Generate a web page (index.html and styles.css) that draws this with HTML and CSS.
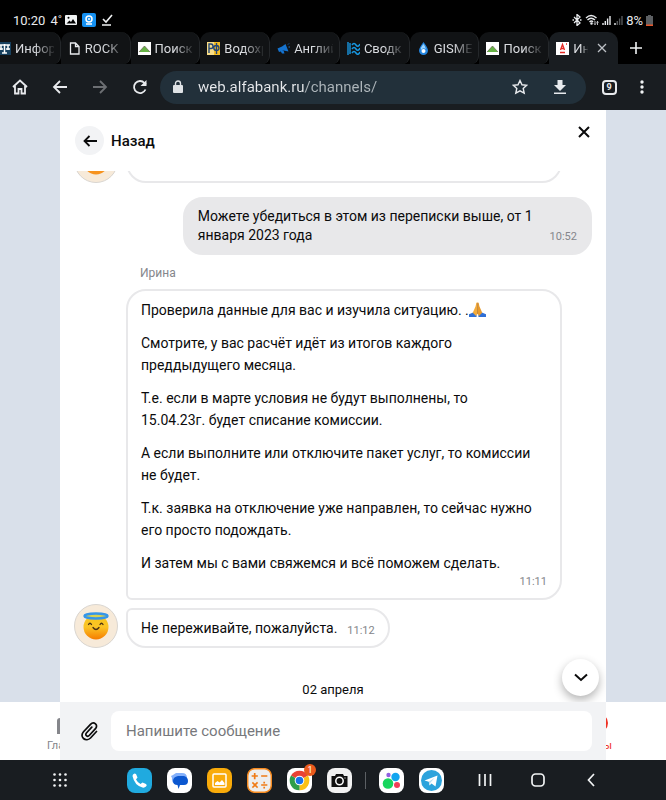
FILE: index.html
```html
<!DOCTYPE html>
<html lang="ru">
<head>
  <meta charset="UTF-8">
  <meta name="viewport" content="width=device-width, initial-scale=1.0">
  <title>Альфа-Банк — чат</title>
  <link rel="stylesheet" href="styles.css">
</head>
<body>
  <!-- Status bar -->
  <div class="status-bar">
    <span>10:20</span>
    <span class="temp">4˚</span>
    <svg width="12" height="12" viewBox="0 0 12 12"><rect x="0" y="1" width="12" height="10" rx="1" fill="#f1f3f4"/><path d="M1.500 9.500l3-3 1.500 1.500L8 5l3 4.500z" fill="#000"/><circle cx="3.500" cy="3.800" r="1" fill="#000"/></svg>
    <svg width="14" height="14" viewBox="0 0 14 14"><rect width="14" height="14" rx="2" fill="#1591f2"/><circle cx="7" cy="6" r="3" fill="none" stroke="#fff" stroke-width="1.500"/><circle cx="7" cy="6" r="1" fill="#fff"/><path d="M4 11h6" stroke="#fff" stroke-width="1.500"/></svg>
    <svg width="12" height="12" viewBox="0 0 12 12" fill="none" stroke="#f1f3f4" stroke-width="1.600"><path d="M2 5l3 3 6-7M1 11h9"/></svg>
    <div class="status-right">
      <svg width="10" height="12" viewBox="0 0 10 12" fill="none" stroke="#e8eaed" stroke-width="1.300"><path d="M2 3l6 6-3 2.500V.5L8 3 2 9M.5 6h1.500M8 6h1.500"/></svg>
      <svg width="14" height="12" viewBox="0 0 14 12" fill="none" stroke="#e8eaed" stroke-width="1.400"><path d="M1 4q5-5 10.500 0M2.500 6q3.500-3.500 7.500 0M4.500 8q2-2 3.500 0"/><circle cx="6.500" cy="9.500" r=".6"/><path d="M10 7v3.500M12.500 11V7.500M9 9.500l1 1.200 1-1.200M11.500 8.500l1-1.200 1 1.200" stroke-width=".8"/></svg>
      <svg width="9" height="10" viewBox="0 0 9 10" stroke="#e8eaed" stroke-width="1.400"><path d="M1 10V8M3.300 10V6M5.600 10V3.500M8 10V1"/></svg>
      <svg width="9" height="10" viewBox="0 0 9 10" stroke="#55585b" stroke-width="1.400"><path d="M1 10V8" stroke="#e8eaed"/><path d="M3.300 10V6M5.600 10V3.500M8 10V1"/></svg>
      <span>8%</span>
      <svg width="7" height="11" viewBox="0 0 7 11"><path d="M2 0h3v1h2v10H0V1h2z" fill="#5c5f62"/><path d="M0 9.500h7V11H0z" fill="#e8562a"/></svg>
    </div>
  </div>

  <!-- Browser tabs -->
  <div class="tab-strip">
    <a class="tab" href="#"><svg class="favicon" viewBox="0 0 13 13"><path fill="#17405e" d="M0 0h13v13H0z"/><path d="M1 3h11M6.500 2v9M4 11h5M3 3v5M10 3v5M1 7h4M8 7h4" stroke="#fff" stroke-width="1.500"/></svg><span>Инфор</span></a>
    <a class="tab" href="#"><svg class="favicon" viewBox="0 0 13 13" fill="none" stroke="#e8eaed" stroke-width="1.300"><path d="M2.500 1h5L11 4.500V12H2.500zM7.500 1v3.500H11"/></svg><span>ROCK</span></a>
    <a class="tab" href="#"><svg class="favicon" viewBox="0 0 13 13"><path fill="#fff" d="M0 0h13v13H0z"/><path d="M6.500 4L1 10h11z" fill="#67b346"/><path d="M1 10l5.500-6L12 10" fill="none" stroke="#675d50" stroke-width=".7"/></svg><span>Поиск</span></a>
    <a class="tab" href="#"><svg class="favicon" viewBox="0 0 13 13"><path fill="#f5bd22" d="M0 0h13v13H0z"/><path d="M0 0h7v13H0z" fill="#f8dc86"/><path d="M2 11V2h2q2 0 2 2.200T4 6.500H2M9.500 1v11M9 3.500c-3 0-3 5 .5 5s3-5 0-5" fill="none" stroke="#244778" stroke-width="1.400"/></svg><span>Водохр</span></a>
    <a class="tab" href="#"><svg class="favicon" viewBox="0 0 13 13" fill="#1573cf"><path d="M8.500 2l3 7.500-5-1-4.500 1.500-1.500-3.500L5 4.500z"/><path d="M3.500 9l3-.5 1 3H5z"/><path d="M11 2.500l1-1M11.500 5H13" stroke="#1573cf"/></svg><span>Англий</span></a>
    <a class="tab" href="#"><svg class="favicon" viewBox="0 0 13 13" fill="none" stroke="#1796df" stroke-width="1.600"><path d="M1 0v13M3 1v11" stroke-width="1.400"/><path d="M5 3q2-3 4 0t4-1M5 7q2-3 4 0t4-1M5 11q2-3 4 0t4-1"/></svg><span>Сводк</span></a>
    <a class="tab" href="#"><svg class="favicon" viewBox="0 0 13 13"><path d="M6.500 0Q11 6 11 8.500a4.500 4.500 0 0 1-9 0Q2 6 6.500 0" fill="#2385df"/><path d="M6.500 2Q3 6 4 8q2-3 5-1-1-3-2.500-5" fill="#9bd5ff"/><circle cx="6.500" cy="9" r="2" fill="#fff"/></svg><span>GISME</span></a>
    <a class="tab" href="#"><svg class="favicon" viewBox="0 0 13 13"><path fill="#fff" d="M0 0h13v13H0z"/><path d="M6.500 4L1 10h11z" fill="#67b346"/><path d="M1 10l5.500-6L12 10" fill="none" stroke="#675d50" stroke-width=".7"/></svg><span>Поиск</span></a>
    <div class="tab tab-active">
      <svg class="favicon" viewBox="0 0 13 13"><path fill="#fff" d="M0 0h13v13H0z"/><path d="M4.500 8L6.500 2.500 8.500 8M5 6.500h3M4 10.500h5M10 2h1" fill="none" stroke="#e52a25" stroke-width="1.300"/></svg><span>Ин</span>
      <button class="tab-close" aria-label="Закрыть вкладку"><svg width="10" height="10" viewBox="0 0 10 10" stroke="#bdc1c6" stroke-width="1.300"><path d="M1 1l8 8M9 1L1 9"/></svg></button>
    </div>
    <button class="tab-new" aria-label="Новая вкладка"><svg width="12" height="12" viewBox="0 0 12 12" stroke="#f1f3f4" stroke-width="1.600"><path d="M6 0v12M0 6h12"/></svg></button>
  </div>

  <!-- Toolbar -->
  <div class="toolbar">
    <button class="tool-btn" aria-label="Домой"><svg width="16" height="16" viewBox="0 0 16 16"><path d="M1 8l7-6.500L15 8M3 7v7.500h3.500V10h3v4.500H13V7"/></svg></button>
    <button class="tool-btn" aria-label="Назад"><svg width="16" height="16" viewBox="0 0 16 16"><path d="M15 8H2M8 2L2 8l6 6"/></svg></button>
    <button class="tool-btn tool-disabled" aria-label="Вперёд"><svg width="16" height="16" viewBox="0 0 16 16"><path d="M1 8h13M8 2l6 6-6 6"/></svg></button>
    <button class="tool-btn" aria-label="Обновить"><svg width="16" height="16" viewBox="0 0 16 16"><path d="M13.500 10.500a6 6 0 1 1-1-6.500L14 5.500"/><path d="M14.500 1v6h-6z" fill="#e8eaed" stroke="none"/></svg></button>
    <div class="omnibox">
      <svg width="10" height="14" viewBox="0 0 10 14"><rect y="5" width="10" height="8" rx="1" fill="#dfe2e5"/><path d="M2.500 5V3.500a2.500 2.500 0 0 1 5 0V5" fill="none" stroke="#dfe2e5" stroke-width="1.400"/></svg>
      <input class="url" type="text" aria-label="Адрес" value="web.alfabank.ru/channels/">
      <button class="tool-btn" aria-label="В закладки"><svg width="16" height="16" viewBox="0 0 16 16"><path d="M8 1.500l2 4.300 4.700.5-3.500 3.200 1 4.700L8 11.800l-4.200 2.400 1-4.700L1.300 6.300 6 5.800z" stroke-width="1.400"/></svg></button>
      <button class="tool-btn" aria-label="Скачать"><svg width="14" height="16" viewBox="0 0 14 16"><path d="M4.500 1h5v5H13l-6 6-6-6h3.500zM1 13.500h12V15H1z" fill="#e8eaed" stroke="none"/></svg></button>
    </div>
    <button class="tool-btn tabs-btn" aria-label="Вкладки"><span>9</span></button>
    <button class="menu-btn" aria-label="Меню"><svg width="4" height="14" viewBox="0 0 4 14" fill="#f1f3f4"><circle cx="2" cy="2" r="1.700"/><circle cx="2" cy="7" r="1.700"/><circle cx="2" cy="12" r="1.700"/></svg></button>
  </div>

  <div class="page">
    <!-- Bank page under the chat -->
    <div class="site">
      <div class="site-nav">
        <a class="site-link" href="#"><svg width="22" height="22" viewBox="0 0 22 22"><path d="M0 8q0-3 3-3h16q3 0 3 3v13H0z" fill="#85868b"/></svg><span>Главная</span></a>
        <a class="site-link site-link-active" href="#"><svg width="22" height="22" viewBox="0 0 22 22"><circle cx="11" cy="10" r="10" fill="#ef3124"/></svg><span>Чаты</span></a>
      </div>
    </div>

    <div class="chat">
      <div class="chat-header">
        <button class="back-btn" id="back" aria-label="Назад"><svg width="14" height="12" viewBox="0 0 14 12" fill="none" stroke="#0b0b0c" stroke-width="1.800"><path d="M14 6H1.500M6.500 1l-5 5 5 5"/></svg></button>
        <label class="chat-title" for="back">Назад</label>
        <button class="close-btn" aria-label="Закрыть"><svg width="12" height="12" viewBox="0 0 12 12" stroke="#0b0b0c" stroke-width="2"><path d="M1 1l10 10M11 1L1 11"/></svg></button>
      </div>

      <div class="messages">
        <div class="row">
          <svg class="avatar" viewBox="0 0 44 44"><circle cx="22" cy="22" r="21.500" fill="#f7ead9" stroke="#d9d5d0"/><circle cx="22" cy="23" r="12.500" fill="#f7931e"/></svg>
          <div class="bubble bubble-wide bubble-prev"></div>
        </div>

        <div class="bubble bubble-own">
          <p>Можете убедиться в этом из переписки выше, от 1 января 2023 года</p>
          <time>10:52</time>
        </div>

        <div class="author">Ирина</div>
        <div class="row">
          <div class="bubble bubble-wide bubble-first">
            <p>Проверила данные для вас и изучила ситуацию. .<svg class="emoji" viewBox="0 0 18 18" role="img" aria-label="Сложенные руки"><path d="M0 14l5-2 3 2.500V17H0zM18 14l-5-2-3 2.500V17h8z" fill="#2f6fd6"/><path d="M8.700 1Q7.400 1.500 7 5.500L4 12.500 7.500 16 9 13z" fill="#f3ab3a"/><path d="M9.300 1q1.300.5 1.700 4.500l3 7-3.500 3.500L9 13z" fill="#e69a2d"/><path d="M9 2v12" stroke="#b36d1c" stroke-width=".7"/></svg></p>
            <p>Смотрите, у вас расчёт идёт из итогов каждого преддыдущего месяца.</p>
            <p>Т.е. если в марте условия не будут выполнены, то 15.04.23г.&nbsp;будет списание комиссии.</p>
            <p>А если выполните или отключите пакет услуг, то комиссии не&nbsp;будет.</p>
            <p>Т.к. заявка на отключение уже направлен, то сейчас нужно его&nbsp;просто подождать.</p>
            <p>И затем мы с вами свяжемся и всё поможем сделать.</p>
            <time>11:11</time>
          </div>
        </div>
        <div class="row">
          <svg class="avatar" viewBox="0 0 44 44">
            <defs><linearGradient id="face" x1="0" y1="0" x2="0" y2="1"><stop offset="0" stop-color="#f6c51c"/><stop offset=".5" stop-color="#fbc425"/><stop offset="1" stop-color="#f57c00"/></linearGradient></defs>
            <circle cx="22" cy="22" r="21.500" fill="#f7ead9" stroke="#d9d5d0"/>
            <circle cx="22" cy="23" r="12.500" fill="url(#face)"/>
            <ellipse cx="22" cy="12" rx="11.500" ry="2.500" fill="#d7d251" stroke="#3696e9" stroke-width="2.500"/>
            <path d="M14.500 20.500q1.500-2.500 3 0M26 20.500q1.500-2.500 3 0M19 23.500q3 4 6 0" fill="none" stroke="#4a3213" stroke-width="1.300" stroke-linecap="round"/>
          </svg>
          <div class="bubble bubble-last">
            <p>Не переживайте, пожалуйста.</p>
            <time>11:12</time>
          </div>
        </div>

        <div class="date">02 апреля</div>
        <button class="scroll-btn" aria-label="Вниз"><svg width="14" height="9" viewBox="0 0 14 9" fill="none" stroke="#0b0b0c" stroke-width="2"><path d="M1 1.500l6 5.500 6-5.500"/></svg></button>
      </div>

      <form class="composer">
        <button class="attach-btn" type="button" aria-label="Прикрепить файл"><svg width="18" height="20" viewBox="0 0 18 20" fill="none" stroke="#0b0b0c" stroke-width="1.700" stroke-linecap="round" stroke-linejoin="round"><path d="M16.500 10.500l-6 6.500c-2 2-5 2.300-7 .5s-2-4.500 0-6.700l7-7.500c1.500-1.600 3.600-1.700 5-.5s1.400 3.300 0 4.900l-6.300 6.800c-.8.900-2 .9-2.800.2s-.8-1.800 0-2.700l5.400-5.800"/></svg></button>
        <input class="composer-input" type="text" placeholder="Напишите сообщение" aria-label="Сообщение">
      </form>
    </div>
  </div>

  <!-- System taskbar -->
  <div class="taskbar">
    <button class="sys-btn" aria-label="Приложения"><svg width="16" height="16" viewBox="0 0 16 16" fill="#f1f3f4"><circle cx="2.500" cy="2.500" r="1.300"/><circle cx="8" cy="2.500" r="1.300"/><circle cx="13.500" cy="2.500" r="1.300"/><circle cx="2.500" cy="8" r="1.300"/><circle cx="8" cy="8" r="1.300"/><circle cx="13.500" cy="8" r="1.300"/><circle cx="2.500" cy="13.500" r="1.300"/><circle cx="8" cy="13.500" r="1.300"/><circle cx="13.500" cy="13.500" r="1.300"/></svg></button>
    <div class="apps">
      <button class="app" aria-label="Телефон"><svg viewBox="0 0 25 25"><rect width="25" height="25" rx="8" fill="#20aadf"/><path d="M5.500 8q0-2 2-2.500l1.500.5 1.500 3.500-1.500 2q1.500 3 4.500 4.500l2-1.500 3.500 1.500q1.500 1 0 2.500t-3.500 1q-8-2-10-11.500" fill="#fff"/></svg></button>
      <button class="app" aria-label="Сообщения"><svg viewBox="0 0 25 25"><rect width="25" height="25" rx="8" fill="#fff"/><path d="M9 5h6q5 0 5 5t-5 6H9q-5-1-4-6l-1-2 2-1z" fill="#83b0fb"/><path d="M11 8h6q4 1 4 5t-4 4h-4l-1.500 4-1-4Q6 17 6 13t5-5" fill="#0b57d0"/></svg></button>
      <button class="app" aria-label="Галерея"><svg viewBox="0 0 25 25"><rect width="25" height="25" rx="8" fill="#f9ab0a"/><rect x="6" y="6" width="13" height="13" rx="1" fill="none" stroke="#fff" stroke-width="1.500"/><path d="M8 17v-2l2.500-2 2 1.500L15 12l2.500 3v2z" fill="#fff"/></svg></button>
      <button class="app" aria-label="Калькулятор"><svg viewBox="0 0 25 25"><rect x=".7" y=".7" width="23.600" height="23.600" rx="7" fill="#eee" stroke="#f68b21" stroke-width="1.500"/><path d="M5.500 8h4.500M7.700 5.800v4.500M15 8h4.500M6 15l4 4M10 15l-4 4M15 17h4.500M17.200 14.500v.1M17.200 19.500v.1" stroke="#f07b16" stroke-width="1.700" stroke-linecap="square"/></svg></button>
      <button class="app" aria-label="Chrome"><svg viewBox="0 0 25 25"><rect width="25" height="25" rx="8" fill="#fff"/><path d="M12.500 12.500L4 7.600a9.800 9.800 0 0 1 17 0z" fill="#ea4335"/><path d="M12.500 12.500L21 7.600a9.800 9.800 0 0 1-8.500 14.700z" fill="#fbc116"/><path d="M12.500 12.500v9.800A9.800 9.800 0 0 1 4 7.600z" fill="#2f9e4b"/><circle cx="12.500" cy="12.500" r="4.800" fill="#fff"/><circle cx="12.500" cy="12.500" r="3.800" fill="#1a73e8"/></svg><span class="badge">1</span></button>
      <button class="app" aria-label="Камера"><svg viewBox="0 0 25 25"><rect width="25" height="25" rx="8" fill="#f2f2f2"/><path d="M4.500 8H8l1-2h7l1 2h3.500v11h-16z" fill="#111"/><circle cx="12.500" cy="13" r="3.700" fill="#111" stroke="#fff" stroke-width="1.500"/><path d="M17.500 10h1" stroke="#fff"/></svg></button>
      <span class="divider"></span>
      <button class="app" aria-label="Компас"><svg viewBox="0 0 25 25"><rect width="25" height="25" rx="8" fill="#fff"/><circle cx="16.500" cy="9" r="4.200" fill="#12a5ef"/><circle cx="9" cy="15.500" r="5.300" fill="#18d65e"/><circle cx="9.500" cy="7" r="2.200" fill="#9061e0"/><circle cx="18" cy="17" r="3" fill="#f03e58"/></svg></button>
      <button class="app" aria-label="Telegram"><svg viewBox="0 0 25 25"><rect width="25" height="25" rx="8" fill="#fff"/><circle cx="12.500" cy="12.500" r="10.500" fill="#2ca3dc"/><path d="M5.500 12.500L18.500 7.500 16.500 18.500l-4-3-2 2-.7-3.700z" fill="#fff"/><path d="M9.800 13.800l6-4-4.300 4.700-.8 2.500z" fill="#b9dcf0"/></svg></button>
    </div>
    <div class="sys-nav">
      <button class="sys-btn" aria-label="Недавние"><svg width="14" height="14" viewBox="0 0 14 14" stroke="#f1f3f4" stroke-width="1.700"><path d="M1.500 1v12M7 1v12M12.500 1v12"/></svg></button>
      <button class="sys-btn" aria-label="Главный экран"><svg width="14" height="14" viewBox="0 0 14 14" fill="none" stroke="#f1f3f4" stroke-width="1.700"><rect x="1" y="1" width="12" height="12" rx="3.500"/></svg></button>
      <button class="sys-btn" aria-label="Назад"><svg width="8" height="14" viewBox="0 0 8 14" fill="none" stroke="#f1f3f4" stroke-width="1.700"><path d="M7 1L1.500 7 7 13"/></svg></button>
    </div>
  </div>
</body>
</html>
```
FILE: styles.css
```css
:root {
  --bar: #191d21;
  --omnibox: #22303a;
  --icon: #e8eaed;
  --text: #0b0b0c;
  --muted: #85868b;
  --line: #e8e8ea;
  --backdrop: #d9e0ea;
  --red: #ef3124;
}

* {
  box-sizing: border-box;
  margin: 0;
  padding: 0;
}

body {
  display: flex;
  flex-direction: column;
  height: 100vh;
  overflow: hidden;
  font-family: Roboto, "Liberation Sans", sans-serif;
  font-size: 15px;
  color: var(--text);
  background: #000;
}

button {
  display: flex;
  align-items: center;
  justify-content: center;
  border: none;
  background: none;
  font-family: inherit;
  cursor: pointer;
}

a {
  color: inherit;
  text-decoration: none;
}

input {
  border: none;
  outline: none;
  font-family: inherit;
}

svg {
  flex-shrink: 0;
}

/* Status bar */
.status-bar {
  display: flex;
  align-items: center;
  gap: 5px;
  flex: 0 0 32px;
  padding: 8px 13px 0 13px;
  font-size: 13px;
  color: var(--icon);
}

.temp {
  margin-right: -2px;
}

.status-right {
  display: flex;
  align-items: center;
  gap: 3px;
  margin-left: auto;
}

/* Tabs */
.tab-strip {
  display: flex;
  flex: 0 0 32px;
  margin-left: -9px;
  color: #dadce0;
  font-size: 13px;
}

.tab {
  display: flex;
  flex: 1 1 0;
  align-items: center;
  gap: 4px;
  min-width: 0;
  padding: 0 6px 0 7px;
  background: #111315;
  border-right: 1px solid #24272a;
  border-radius: 10px 10px 8px 0;
}

.tab span {
  flex: 1;
  overflow: hidden;
  white-space: nowrap;
  mask-image: linear-gradient(90deg, #000 50%, rgba(0, 0, 0, 0.1));
}

.favicon {
  width: 13px;
  height: 13px;
}

.tab-active {
  background: var(--bar);
  border-right: none;
  border-radius: 10px 10px 0 0;
}

.tab-close {
  width: 20px;
}

.tab-new {
  width: 48px;
  padding-right: 12px;
}

/* Toolbar */
.toolbar {
  display: flex;
  align-items: center;
  flex: 0 0 46px;
  padding-right: 14px;
  background: var(--bar);
}

.tool-btn {
  width: 40px;
  height: 32px;
}

.tool-btn svg {
  fill: none;
  stroke: var(--icon);
  stroke-width: 1.8;
}

.tool-disabled {
  opacity: 0.4;
}

.omnibox {
  display: flex;
  align-items: center;
  flex: 1;
  height: 33px;
  padding: 0 6px 0 13px;
  background: var(--omnibox);
  border-radius: 17px;
}

/* Host is bright, the path after it is dimmed */
.url {
  flex: 1;
  min-width: 0;
  margin-left: 15px;
  font-size: 15px;
  color: transparent;
  background: linear-gradient(90deg, #e8eaed 107px, #aeb6bb 107px);
  background-clip: text;
}

.tabs-btn {
  width: 46px;
}

.tabs-btn span {
  width: 15px;
  height: 15px;
  border: 2px solid var(--icon);
  border-radius: 4px;
  font-size: 9px;
  font-weight: bold;
  line-height: 11px;
  color: var(--icon);
}

.menu-btn {
  width: 20px;
  height: 32px;
}

/* Page: site and chat share one grid cell */
.page {
  display: grid;
  grid-template: minmax(0, 1fr) / minmax(0, 1fr);
  flex: 1;
  min-height: 0;
  background: var(--backdrop);
}

.site,
.chat {
  grid-area: 1 / 1;
  display: flex;
  flex-direction: column;
  min-height: 0;
}

.site {
  justify-content: flex-end;
}

.site-nav {
  display: flex;
  justify-content: space-between;
  height: 58px;
  padding: 11px 54px 0 47px;
  background: #fff;
}

.site-link {
  display: flex;
  flex-direction: column;
  align-items: center;
  gap: 4px;
  font-size: 11px;
  color: var(--muted);
}

.site-link-active {
  color: var(--red);
}

.chat {
  margin: 0 60px;
  background: #fff;
}

.chat-header {
  display: flex;
  align-items: center;
  padding: 16px 16px 16px 15px;
}

.back-btn {
  width: 29px;
  height: 29px;
  background: #f2f3f5;
  border-radius: 50%;
}

.chat-title {
  margin-left: 7px;
  font-weight: 500;
}

.close-btn {
  align-self: flex-start;
  margin-left: auto;
}

/* Messages */
.messages {
  position: relative;
  display: flex;
  flex-direction: column;
  justify-content: flex-end;
  flex: 1;
  min-height: 0;
  padding: 0 14px 4px;
  overflow: hidden;
}

.row {
  display: flex;
  align-items: flex-end;
  padding-left: 52px;
}

.avatar {
  width: 44px;
  height: 44px;
  margin-left: -52px;
  margin-right: 8px;
}

.bubble {
  padding: 8px 13px;
  border: 2px solid var(--line);
  border-radius: 20px;
  font-size: 14px;
  line-height: 22px;
}

.bubble-wide {
  flex: 1;
  margin-right: 30px;
}

.bubble-prev {
  height: 44px;
}

.bubble-own {
  display: flex;
  align-items: flex-end;
  align-self: flex-end;
  width: 79%;
  margin-top: 14px;
  background: var(--line);
  line-height: 19px;
}

.bubble-own p {
  flex: 1;
}

.author {
  margin: 10px 0 8px 66px;
  font-size: 12px;
  line-height: 16px;
  color: var(--muted);
}

.bubble-first {
  border-bottom-left-radius: 6px;
}

.bubble-first p + p {
  margin-top: 11px;
}

.bubble-first time {
  display: block;
  text-align: right;
}

.bubble-last {
  display: flex;
  align-items: flex-end;
  gap: 10px;
  margin-top: 8px;
  padding: 7px 13px;
  border-top-left-radius: 6px;
}

.bubble time {
  font-size: 11px;
  line-height: 16px;
  color: var(--muted);
}

.emoji {
  width: 17px;
  height: 17px;
  vertical-align: -3px;
}

.date {
  margin-top: 34px;
  font-size: 13px;
  line-height: 16px;
  text-align: center;
}

.scroll-btn {
  position: absolute;
  right: 7px;
  bottom: 6px;
  width: 37px;
  height: 37px;
  background: #fff;
  border-radius: 50%;
  box-shadow: 0 4px 10px rgba(0, 0, 0, 0.3);
}

/* Composer */
.composer {
  display: flex;
  align-items: center;
  height: 58px;
  padding: 0 14px;
  background: #f2f3f5;
}

.attach-btn {
  width: 30px;
  height: 40px;
}

.composer-input {
  flex: 1;
  min-width: 0;
  height: 40px;
  margin-left: 7px;
  padding: 0 15px;
  font-size: 15px;
  background: #fff;
  border-radius: 8px;
}

.composer-input::placeholder {
  color: #77787c;
}

/* Taskbar */
.taskbar {
  display: flex;
  align-items: center;
  flex: 0 0 40px;
  padding: 0 63px 0 48px;
  background: var(--bar);
}

.sys-btn {
  width: 24px;
  height: 32px;
}

.apps {
  display: flex;
  align-items: center;
  gap: 15px;
  margin-left: 55px;
}

.app {
  position: relative;
  width: 25px;
  height: 25px;
}

.app svg {
  width: 25px;
  height: 25px;
}

.badge {
  position: absolute;
  top: -4px;
  right: -4px;
  width: 12px;
  height: 12px;
  border-radius: 50%;
  font-size: 9px;
  line-height: 12px;
  color: #fff;
  background: #ea5a1c;
}

.divider {
  width: 1px;
  height: 17px;
  margin: 0 -2px;
  background: #5c6064;
}

.sys-nav {
  display: flex;
  gap: 29px;
  margin-left: auto;
}
```
